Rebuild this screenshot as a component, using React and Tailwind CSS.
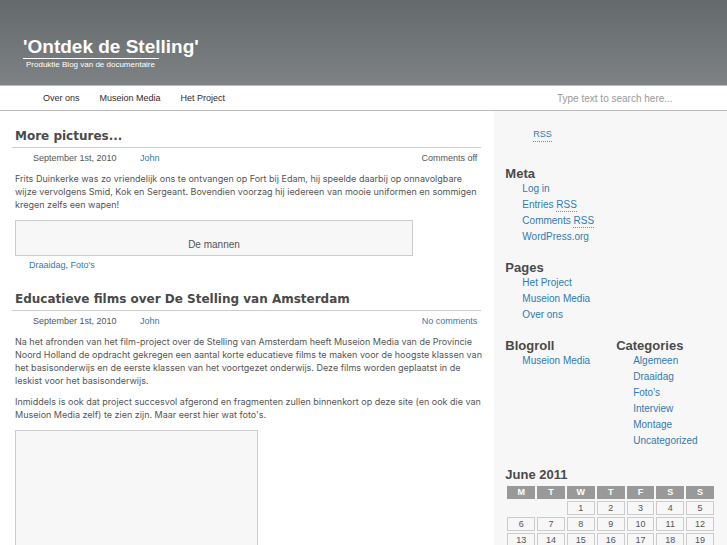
const menu = ['Over ons', 'Museion Media', 'Het Project'];
const pages = ['Het Project', 'Museion Media', 'Over ons'];
const categories = ['Algemeen', 'Draaidag', "Foto's", 'Interview', 'Montage', 'Uncategorized'];
const weekdays = ['M', 'T', 'W', 'T', 'F', 'S', 'S'];

// June 2011 starts on a Wednesday
const weeks = [0, 1, 2, 3, 4].map((week) =>
  weekdays.map((_, day) => {
    const date = week * 7 + day - 1;
    return date > 0 && date <= 30 ? date : null;
  })
);

const Link = ({ children }) => (
  <a href="#" className="text-[#337ab0] hover:underline">
    {children}
  </a>
);

const Rss = () => (
  <abbr title="Really Simple Syndication" className="inline-block h-[13px] border-b border-dotted border-[#888] leading-[11px] no-underline">
    RSS
  </abbr>
);

const Widget = ({ title, children }) => (
  <section>
    <h2 className="text-[13px] leading-[15px] font-bold text-[#4a4a4a]">{title}</h2>
    <ul className="pl-[17px] leading-[15px]">{children}</ul>
  </section>
);

const Item = ({ children }) => <li className="h-4 whitespace-nowrap">{children}</li>;

const Text = ({ children }) => (
  <p className="font-['Inter','Liberation_Sans',sans-serif] text-[9px] whitespace-nowrap">{children}</p>
);

const Post = ({ title, comments, children }) => (
  <article>
    <h2 className="ml-3 border-b border-[#ccc] pb-[3px] pl-[3px] font-['DejaVu_Sans','Verdana',sans-serif] text-[12px] leading-4 font-bold text-[#4a4a4a]">
      {title}
    </h2>
    <div className="flex pt-1 pr-1 pl-[33px] text-[9px] leading-3">
      <span className="w-[107px]">September 1st, 2010</span>
      <Link>John</Link>
      <span className="ml-auto">{comments}</span>
    </div>
    <div className="flex flex-col gap-2 pt-2 pl-[15px]">{children}</div>
  </article>
);

export default function App() {
  return (
    <div className="bg-white font-['Liberation_Sans','Arial',sans-serif] text-[10px] leading-[13px] text-[#555]">
      <header className="h-[86px] border-b border-[#bbb] bg-linear-to-b from-[#64696b] to-[#7e8284] pt-9 pl-[23px] text-white">
        <h1 className="text-[19px] leading-[22px] font-bold">'Ontdek de Stelling'</h1>
        <p className="w-[136px] border-t border-white pt-px pl-[3px] text-[8px] leading-[10px] whitespace-nowrap">
          Produktie Blog van de documentaire
        </p>
      </header>

      <nav className="flex h-[25px] items-center border-b border-[#bbb] pl-[43px]">
        <ul className="flex gap-5 text-[9px] text-[#33291f]">
          {menu.map((item) => (
            <li key={item}>
              <a href="#">{item}</a>
            </li>
          ))}
        </ul>
        <form className="ml-auto w-[170px]">
          <input
            type="text"
            aria-label="Search"
            placeholder="Type text to search here..."
            className="w-[130px] text-[10px] placeholder:text-[#999] focus:outline-none"
          />
        </form>
      </nav>

      <div className="flex">
        <main className="flex w-[68%] flex-col gap-[19px] pt-[17px] pr-[13px]">
          <Post title="More pictures..." comments="Comments off">
            <Text>
              Frits Duinkerke was zo vriendelijk ons te ontvangen op Fort bij Edam, hij speelde daarbij op onnavolgbare
              <br />
              wijze vervolgens Smid, Kok en Sergeant. Bovendien voorzag hij iedereen van mooie uniformen en sommigen
              <br />
              kregen zelfs een wapen!
            </Text>
            <div>
              <figure className="mt-px h-9 w-[398px] border border-[#ccc] bg-[#f7f7f7] pt-[17px] text-center">
                <figcaption>De mannen</figcaption>
              </figure>
              <p className="pt-[3px] pl-[14px] text-[9px]">
                <Link>Draaidag</Link>, <Link>Foto's</Link>
              </p>
            </div>
          </Post>

          <Post title="Educatieve films over De Stelling van Amsterdam" comments={<Link>No comments</Link>}>
            <Text>
              Na het afronden van het film-project over de Stelling van Amsterdam heeft Museion Media van de Provincie
              <br />
              Noord Holland de opdracht gekregen een aantal korte educatieve films te maken voor de hoogste klassen van
              <br />
              het basisonderwijs en de eerste klassen van het voortgezet onderwijs. Deze films worden geplaatst in de
              <br />
              leskist voor het basisonderwijs.
            </Text>
            <Text>
              Inmiddels is ook dat project succesvol afgerond en fragmenten zullen binnenkort op deze site (en ook die van
              <br />
              Museion Media zelf) te zien zijn. Maar eerst hier wat foto's.
            </Text>
            <figure className="mt-px h-[180px] w-[243px] border border-[#ccc] bg-[#f7f7f7]" />
          </Post>
        </main>

        <aside className="flex flex-1 flex-col bg-[#f7f7f7] pt-4 pl-[11px]">
          <p className="pl-7 text-[9px] leading-[15px]">
            <Link><Rss /></Link>
          </p>
          <div className="mt-6 flex flex-col gap-[15px]">
            <Widget title="Meta">
              <Item><Link>Log in</Link></Item>
              <Item><Link>Entries <Rss /></Link></Item>
              <Item><Link>Comments <Rss /></Link></Item>
              <Item><Link>WordPress.org</Link></Item>
            </Widget>
            <Widget title="Pages">
              {pages.map((page) => (
                <Item key={page}><Link>{page}</Link></Item>
              ))}
            </Widget>
            <div className="grid grid-cols-2">
              <Widget title="Blogroll">
                <Item><Link>Museion Media</Link></Item>
              </Widget>
              <Widget title="Categories">
                {categories.map((category) => (
                  <Item key={category}><Link>{category}</Link></Item>
                ))}
              </Widget>
            </div>
          </div>

          <table className="mt-[18px] mr-[11px] table-fixed border-separate border-spacing-[2px] text-center text-[9px] leading-3">
            <caption className="pb-px text-left text-[13px] leading-4 font-bold text-[#4a4a4a]">June 2011</caption>
            <thead className="text-white">
              <tr>
                {weekdays.map((day, i) => (
                  <th key={i} className="bg-[#999] pb-px">{day}</th>
                ))}
              </tr>
            </thead>
            <tbody>
              {weeks.map((week, i) => (
                <tr key={i}>
                  {week.map((date, j) => (
                    <td key={j} className={date ? 'border border-[#ccc]' : ''}>{date}</td>
                  ))}
                </tr>
              ))}
            </tbody>
          </table>
        </aside>
      </div>
    </div>
  );
}
